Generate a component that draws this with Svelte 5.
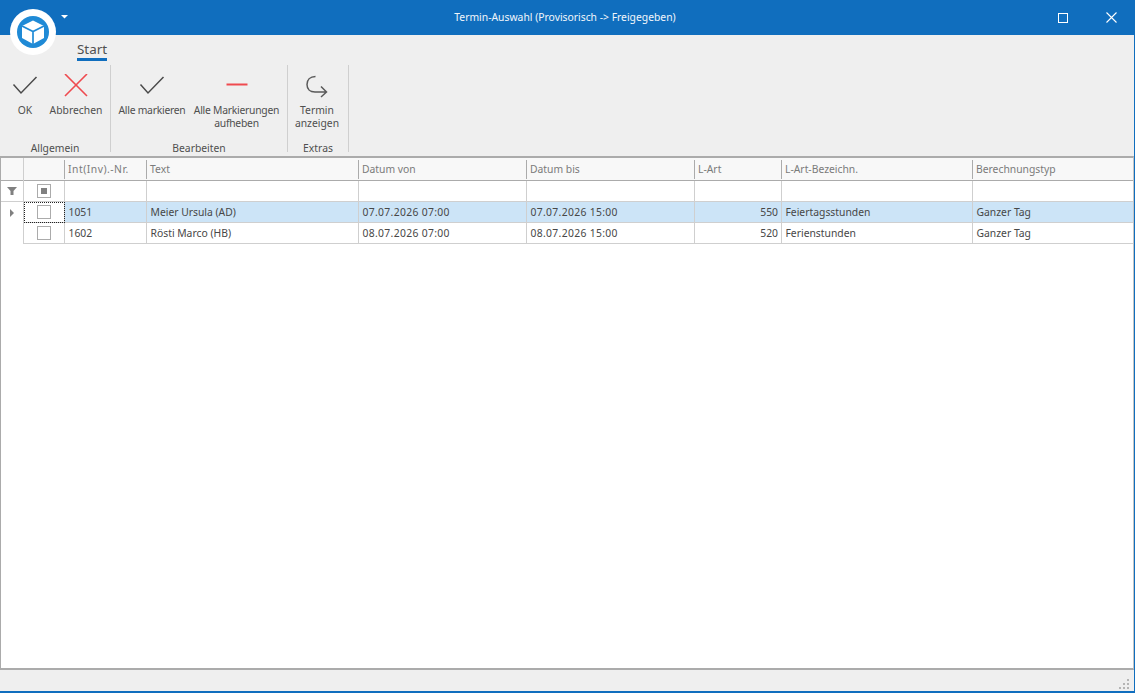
<script>
  const cols = [
    { label: 'Int(Inv).-Nr.', key: 'nr', wide: true },
    { label: 'Text', key: 'text' },
    { label: 'Datum von', key: 'von', date: true },
    { label: 'Datum bis', key: 'bis', date: true },
    { label: 'L-Art', key: 'art', right: true },
    { label: 'L-Art-Bezeichn.', key: 'bez' },
    { label: 'Berechnungstyp', key: 'typ' }
  ];
  const rows = [
    { nr: '1051', text: 'Meier Ursula (AD)', von: '07.07.2026 07:00', bis: '07.07.2026 15:00', art: '550', bez: 'Feiertagsstunden', typ: 'Ganzer Tag' },
    { nr: '1602', text: 'Rösti Marco (HB)', von: '08.07.2026 07:00', bis: '08.07.2026 15:00', art: '520', bez: 'Ferienstunden', typ: 'Ganzer Tag' }
  ];
</script>

<div class="window">
  <header class="titlebar">
    <svg class="caret" width="7" height="4" viewBox="0 0 7 4"><path d="M0 0h7L3.500 3.500z" fill="#fff" /></svg>
    <span class="title">Termin-Auswahl (Provisorisch -&gt; Freigegeben)</span>
    <div class="winbtns">
      <button class="winbtn max" aria-label="Maximieren">
        <svg width="10" height="10" viewBox="0 0 10 10"><rect x=".5" y=".5" width="9" height="9" fill="none" stroke="#fff" /></svg>
      </button>
      <button class="winbtn close" aria-label="Schließen">
        <svg width="11" height="11" viewBox="0 0 11 11"><path d="M.5.500l10 10M10.500.500l-10 10" fill="none" stroke="#fff" stroke-width="1.100" /></svg>
      </button>
    </div>
  </header>

  <div class="logo">
    <svg width="46" height="46" viewBox="0 0 46 46">
      <circle cx="23" cy="23" r="23" fill="#fff" />
      <circle cx="23" cy="23" r="16" fill="#1f8ad6" />
      <path d="M23 11.500L34 17v12l-11 6-11-6V17z" fill="#fff" />
      <path d="M12 17l11 5.500L34 17M23 22.500V35" fill="none" stroke="#1f8ad6" stroke-width="1.700" />
    </svg>
  </div>

  <section class="ribbon">
    <div class="tabs"><span class="tab">Start</span></div>
    <div class="groups">
      <div class="group g1">
        <div class="btns">
          <div class="rbtn w-ok">
            <svg width="26" height="24" viewBox="0 0 26 24"><path d="M1.500 10.500L9 19 24.500 3" fill="none" stroke="#4a4a4a" stroke-width="1.500" /></svg>
            <span>OK</span>
          </div>
          <div class="rbtn w-ab">
            <svg width="26" height="24" viewBox="0 0 26 24"><path d="M2 0l22 22M24 0L2 22" fill="none" stroke="#ef4a4f" stroke-width="1.600" /></svg>
            <span>Abbrechen</span>
          </div>
        </div>
        <div class="cap">Allgemein</div>
      </div>
      <div class="group g2">
        <div class="btns">
          <div class="rbtn w-am">
            <svg width="26" height="24" viewBox="0 0 26 24"><path d="M1.500 10.500L9 19 24.500 3" fill="none" stroke="#4a4a4a" stroke-width="1.500" /></svg>
            <span class="tight">Alle markieren</span>
          </div>
          <div class="rbtn w-aa">
            <svg width="26" height="24" viewBox="0 0 26 24"><path d="M2.500 10.500h21" fill="none" stroke="#ef4a4f" stroke-width="2" /></svg>
            <span class="tight">Alle Markierungen aufheben</span>
          </div>
        </div>
        <div class="cap">Bearbeiten</div>
      </div>
      <div class="group g3">
        <div class="btns">
          <div class="rbtn w-te">
            <svg width="26" height="24" viewBox="0 0 26 24"><path d="M11.500 2.500C6 2.500 3 6 3 10.500 3 15 6 18 11 18h11.500M17 12.500l5.500 5.500-5.500 5" fill="none" stroke="#5a5a5a" stroke-width="1.500" /></svg>
            <span>Termin anzeigen</span>
          </div>
        </div>
        <div class="cap">Extras</div>
      </div>
    </div>
  </section>

  <main class="grid">
    <div class="line head">
      <div class="ind"></div>
      <div class="chk"></div>
      {#each cols as c}
        <div class="hc"><span class:wide={c.wide}>{c.label}</span></div>
      {/each}
    </div>
    <div class="line filter">
      <div class="ind">
        <svg width="10" height="8" viewBox="0 0 10 8"><path d="M0 0h10L6.500 4v4h-3V4z" fill="#808080" /></svg>
      </div>
      <div class="chk"><span class="box mixed"><i></i></span></div>
      {#each cols as c}<div class="fc"></div>{/each}
    </div>
    {#each rows as r, i}
      <div class="line row" class:sel={i === 0}>
        <div class="ind plain">
          {#if i === 0}<svg width="4" height="8" viewBox="0 0 4 8"><path d="M0 0l4 4-4 4z" fill="#808080" /></svg>{/if}
        </div>
        <div class="chk" class:focus={i === 0}><span class="box"></span></div>
        {#each cols as c}
          <div class="dc" class:right={c.right} class:date={c.date}>{r[c.key]}</div>
        {/each}
      </div>
    {/each}
  </main>

  <footer class="status">
    <svg width="11" height="11" viewBox="0 0 11 11" fill="#b5b5b5">
      <rect x="8" y="0" width="2" height="2" /><rect x="4" y="4" width="2" height="2" /><rect x="8" y="4" width="2" height="2" />
      <rect x="0" y="8" width="2" height="2" /><rect x="4" y="8" width="2" height="2" /><rect x="8" y="8" width="2" height="2" />
    </svg>
  </footer>
</div>

<style>
  :global(body) { margin: 0; background: #efefef; }
  .window {
    position: relative;
    width: 1135px;
    height: 693px;
    box-sizing: border-box;
    display: flex;
    flex-direction: column;
    background: #efefef;
    border-bottom: 2px solid #106ebe;
    border-right: 1px solid #106ebe;
    font: 10.35px/13px "Noto Sans", "Open Sans", sans-serif;
    color: #505050;
    overflow: hidden;
  }
  .titlebar {
    height: 35px;
    flex: none;
    background: #106ebe;
    display: flex;
    align-items: center;
    justify-content: center;
    position: relative;
    color: #fff;
  }
  .caret { position: absolute; left: 61px; top: 15px; }
  .title { position: relative; left: -2px; color: #f0f6fb; }
  .winbtns { position: absolute; right: 0; top: 0; display: flex; }
  .winbtn {
    height: 35px; padding: 0; border: 0; background: none;
    display: flex; align-items: center; justify-content: center;
  }
  .max { width: 52px; }
  .close { width: 45px; }
  .logo { position: absolute; left: 10px; top: 9px; width: 46px; height: 46px; }

  .ribbon { height: 122px; flex: none; display: flex; flex-direction: column; background: #efefef; }
  .tabs { height: 26px; padding: 6px 0 0 77px; box-sizing: border-box; flex: none; }
  .tab {
    display: inline-block; height: 20px; box-sizing: border-box;
    font-size: 13.400px; line-height: 16px; color: #505050;
    border-bottom: 3px solid #106ebe;
  }
  .groups { display: flex; margin-top: 4px; height: 87px; }
  .group {
    display: flex; flex-direction: column; box-sizing: border-box;
    border-right: 1px solid #cfcfcf;
  }
  .g1 { width: 111px; padding-left: 8px; }
  .g2 { width: 177px; padding-left: 3px; }
  .g3 { width: 61px; }
  .btns { display: flex; flex: 1; }
  .rbtn {
    display: flex; flex-direction: column; align-items: center;
    padding-top: 9px; text-align: center; box-sizing: border-box;
    flex: none;
  }
  .rbtn svg { flex: none; }
  .rbtn span { margin-top: 6px; }
  .rbtn span.tight { letter-spacing: -0.250px; }
  .w-ok { width: 34px; }
  .w-ab { width: 60px; margin-left: 4px; }
  .w-am { width: 76px; }
  .w-aa { width: 93px; }
  .w-te { width: 58px; }
  .cap { height: 13px; text-align: center; line-height: 13px; margin-bottom: -3px; }
  .g1 .cap { margin-left: -8px; }
  .g2 .cap { margin-left: -3px; }

  .grid {
    flex: 1;
    background: #fff;
    border-style: solid;
    border-width: 2px 1px 2px 1px;
    border-color: #ababab #c4c4c4 #ababab #ababab;
    margin-top: -1px;
    color: #505050;
  }
  .line {
    display: grid;
    box-sizing: border-box;
    grid-template-columns: 23px 41px 82px 212px 168px 168px 87px 191px 1fr;
  }
  .line > div { box-sizing: border-box; }
  .head { height: 23px; background: #f8f8f8; border-bottom: 1px solid #ababab; }
  .head .ind, .filter .ind { border-right: 1px solid #cfcfcf; }
  .head .chk { border-right: 1px solid transparent; }
  .hc { padding: 2px 0; display: flex; align-items: stretch; color: #7b7b7b; }
  .hc span { display: block; flex: 1; border-left: 1px solid #ababab; margin-left: -1px; padding: 2px 3px; line-height: 15px; white-space: nowrap; }
  .hc span.wide { letter-spacing: .500px; }
  .filter { height: 21px; border-bottom: 1px solid #cfcfcf; }
  .filter .ind, .filter .chk, .row .chk { display: flex; align-items: center; justify-content: center; }
  .filter .chk { border-right: 1px solid #cfcfcf; }
  .fc { border-right: 1px solid #cfcfcf; }
  .fc:last-child { border-right: 0; }
  .box {
    display: flex; align-items: center; justify-content: center;
    width: 14px; height: 14px; box-sizing: border-box;
    border: 1px solid #ababab; background: #fff;
  }
  .box i { display: block; width: 6px; height: 6px; background: #808080; }
  .row { height: 21px; }
  .row .ind.plain { display: flex; align-items: center; padding-left: 9px; background: #fff; border-right: 1px solid #cfcfcf; }
  .row .chk { background: #fff; border-right: 1px solid #cfcfcf; border-bottom: 1px solid #cfcfcf; }
  .row .chk.focus { outline: 1px dotted #222; outline-offset: -1px; }
  .dc {
    border-right: 1px solid #cfcfcf;
    border-bottom: 1px solid #cfcfcf;
    padding: 3px 3px 0 3.500px;
    line-height: 15px;
    color: #474747;
    white-space: nowrap;
  }
  .dc.date { letter-spacing: .330px; }
  .dc:last-child { border-right: 0; }
  .right { text-align: right; }
  .sel .dc { background: #cce4f7; }
  .status { height: 20px; flex: none; display: flex; justify-content: flex-end; align-items: flex-end; padding: 0 4px 1px 0; background: #efefef; }
</style>
